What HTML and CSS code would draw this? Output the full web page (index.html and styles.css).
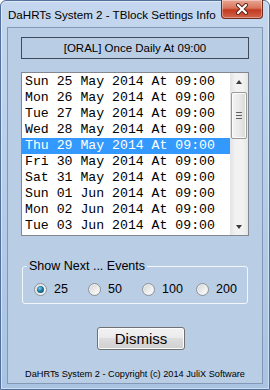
FILE: index.html
```html
<!DOCTYPE html>
<html>
<head>
    <title>TBlock Settings Info</title>
    <link rel="stylesheet" href="styles.css">
</head>
<body>
    <div class="window">
        <div class="titlebar">
            <span class="title">DaHRTs System 2 - TBlock Settings Info</span>
            <button class="close" title="Close">
                <svg width="14" height="12" viewBox="0 0 14 12">
                    <path d="M3 2 L11 10 M11 2 L3 10" stroke="#5a2418" stroke-width="4" stroke-linecap="round"/>
                    <path d="M3 2 L11 10 M11 2 L3 10" stroke="#fff" stroke-width="2.2" stroke-linecap="round"/>
                </svg>
            </button>
        </div>

        <div class="client">
            <div class="summary">[ORAL] Once Daily At 09:00</div>

            <div class="listbox">
                <ul class="items">
                    <li>Sun 25 May 2014 At 09:00</li>
                    <li>Mon 26 May 2014 At 09:00</li>
                    <li>Tue 27 May 2014 At 09:00</li>
                    <li>Wed 28 May 2014 At 09:00</li>
                    <li class="selected">Thu 29 May 2014 At 09:00</li>
                    <li>Fri 30 May 2014 At 09:00</li>
                    <li>Sat 31 May 2014 At 09:00</li>
                    <li>Sun 01 Jun 2014 At 09:00</li>
                    <li>Mon 02 Jun 2014 At 09:00</li>
                    <li>Tue 03 Jun 2014 At 09:00</li>
                </ul>
                <div class="scrollbar">
                    <div class="arrow"><span class="up"></span></div>
                    <div class="thumb"><span class="grip"></span></div>
                    <div class="track"></div>
                    <div class="arrow"><span class="down"></span></div>
                </div>
            </div>

            <fieldset class="range">
                <legend>Show Next ... Events</legend>
                <div class="options">
                    <label class="option"><input type="radio" name="count" checked> 25</label>
                    <label class="option"><input type="radio" name="count"> 50</label>
                    <label class="option"><input type="radio" name="count"> 100</label>
                    <label class="option"><input type="radio" name="count"> 200</label>
                </div>
            </fieldset>

            <button class="dismiss">Dismiss</button>

            <p class="footer">DaHRTs System 2 - Copyright (c) 2014 JuliX Software</p>
        </div>
    </div>
</body>
</html>
```

FILE: styles.css
```css
* { box-sizing: border-box; }
body { margin: 0; font-family: "Liberation Sans", Arial, sans-serif; color: #000; }

.window {
    width: 270px;
    height: 390px;
    border: 1px solid #52709a;
    border-radius: 6px 6px 0 0;
    background: linear-gradient(#c4d7ee, #a9c3e3);
    box-shadow: inset 0 0 0 1px rgba(255,255,255,0.45);
    display: flex;
    flex-direction: column;
}

.titlebar { height: 26px; display: flex; align-items: center; padding-left: 7px; }
.title { font-size: 11.6px; white-space: nowrap; }
.close {
    margin: -1px 6px 0 auto;
    align-self: flex-start;
    width: 42px;
    height: 19px;
    padding: 0;
    border: 1px solid #6e2d1e;
    border-top: none;
    border-radius: 0 0 4px 4px;
    background: linear-gradient(#e9a896, #d9735a 45%, #c23a20 55%, #d0644a);
    box-shadow: inset 0 0 0 1px rgba(255,255,255,0.35);
    display: flex;
    align-items: center;
    justify-content: center;
}

.client {
    margin: 0 6px 5px;
    height: 357px;
    border: 1px solid #8298b6;
    background: #b9cde5;
    padding: 9px 13px 0;
}

.summary {
    height: 22px;
    border: 1px solid #3d4b5c;
    line-height: 20px;
    text-align: center;
    font-size: 11.5px;
}

.listbox {
    margin-top: 13px;
    height: 164px;
    display: flex;
    border: 1px solid #828790;
    background: #fff;
}
.items {
    flex: 1;
    list-style: none;
    margin: 0;
    padding: 1px 0;
    font-family: "Liberation Mono", "Courier New", monospace;
    font-size: 13.2px;
}
.items li { height: 16px; line-height: 16px; padding-left: 3px; white-space: pre; }
.items li.selected { background: #3399ff; color: #fff; }

.scrollbar {
    width: 18px;
    display: flex;
    flex-direction: column;
    background: linear-gradient(90deg, #e3e3e3, #f2f2f2 30%, #f2f2f2 70%, #e6e6e6);
}
.arrow { height: 17px; display: flex; align-items: center; justify-content: center; }
.up, .down { width: 0; height: 0; border-left: 3.5px solid transparent; border-right: 3.5px solid transparent; }
.up { border-bottom: 4px solid #3a3a3a; }
.down { border-top: 4px solid #3a3a3a; }
.thumb {
    margin: 2px 1px 0;
    height: 47px;
    border: 1px solid #9a9a9a;
    border-radius: 2px;
    background: linear-gradient(90deg, #f4f4f4, #e9e9e9 50%, #d9d9d9);
    box-shadow: inset 0 0 0 1px #fbfbfb;
    display: flex;
    align-items: center;
    justify-content: center;
}
.grip {
    width: 6px;
    height: 7px;
    background: repeating-linear-gradient(#5f5f5f 0 1px, transparent 1px 3px);
}
.track { flex: 1; }

.range {
    margin: 23px 1px 0;
    padding: 0 0 6px;
    border: 1px solid #f3f7fc;
    border-radius: 3px;
}
.range legend { margin-left: 4px; padding: 0 2px; font-size: 12.5px; line-height: 15px; }
.options {
    display: grid;
    grid-template-columns: 54px 54px 54px auto;
    margin: 7px 0 0 11px;
    height: 16px;
    align-items: center;
}
.option { display: flex; align-items: center; gap: 7px; font-size: 12.5px; }
.option input {
    appearance: none;
    margin: 0;
    width: 13px;
    height: 13px;
    border: 1px solid #8e9297;
    border-radius: 50%;
    background: linear-gradient(135deg, #d2d2d2, #f4f4f4 70%, #ffffff);
    box-shadow: inset 0 0 0 1px #eeeeee;
    display: grid;
    place-items: center;
}
.option input:checked::after {
    content: "";
    width: 7px;
    height: 7px;
    border-radius: 50%;
    background: radial-gradient(circle at 40% 35%, #7fd0ec, #1d7aa3 45%, #0b3d5a);
}

.dismiss {
    display: block;
    margin: 23px 0 0 76px;
    width: 88px;
    height: 23px;
    border: 1px solid #707070;
    border-radius: 3px;
    background: linear-gradient(#f2f2f2, #ebebeb 45%, #dddddd 50%, #cfcfcf);
    box-shadow: inset 0 0 0 1px #fcfcfc;
    font-family: "Liberation Sans", Arial, sans-serif;
    font-size: 15px;
    padding: 0;
}

.footer { margin: 18px 0 0; text-align: center; font-size: 9.2px; line-height: 12px; white-space: nowrap; }
```
